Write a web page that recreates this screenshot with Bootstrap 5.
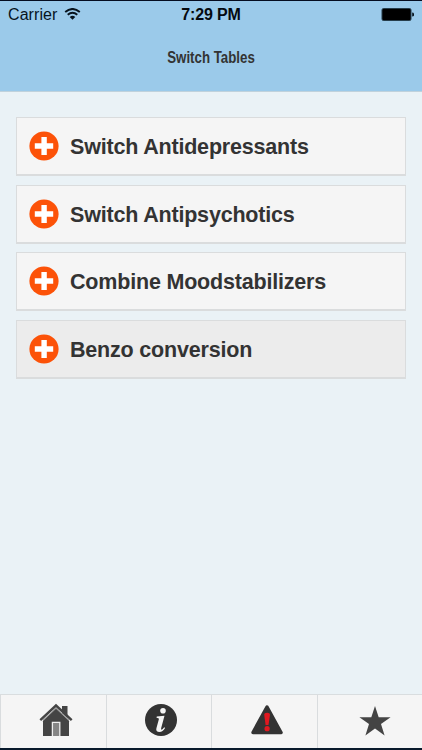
<!DOCTYPE html>
<html lang="en">
<head>
<meta charset="utf-8">
<meta name="viewport" content="width=device-width, initial-scale=1">
<title>Switch Tables</title>
<link href="https://cdn.jsdelivr.net/npm/bootstrap@5.3.0/dist/css/bootstrap.min.css" rel="stylesheet">
<style>
body{height:750px;background:#eaf2f6;font-family:"Liberation Sans",Arial,sans-serif;color:#333;overflow:hidden}
.app-head{height:92px;background:#9bcaea;border-top:1px solid #050d20;border-bottom:1px solid #c0d2dc}
.status{height:28px;padding:0 8px 0 8px;font-size:16px;color:#07131d;line-height:28px}
.status>*{flex:1 1 0}
.clock{font-weight:bold;color:#050a10;letter-spacing:-.15px}
.carrier{letter-spacing:.08px}
.wifi{margin:-2px 0 0 7px}
.battery{margin-bottom:2px}
.page-title{font-size:16px;font-weight:bold;line-height:20px;margin:19px 0 0;transform:scaleX(.83)}
.choices{padding:25px 16px 0;gap:8.7px}
.choice{height:59px;background:#f5f5f5;border:1px solid #dadcdd;border-bottom-width:2px;border-radius:0;padding:2px 12px 0 11.5px;gap:11.5px;color:#333;font-size:21.5px;font-weight:bold;letter-spacing:-.19px;white-space:nowrap}
.choice:hover,.choice.current{background:#ececec}
.choice svg{flex:none;margin-top:-2px}
.tabs{height:56px;background:#f5f5f5;border-top:1px solid #d9dddf;border-bottom:2px solid #081a2c}
.tabs a{border-left:1px solid #d9dcde;flex:0 0 25%;padding:0 0 3px 5px}
.tabs a:last-child{padding-left:10px}
</style>
<script src="https://cdn.jsdelivr.net/npm/bootstrap@5.3.0/dist/js/bootstrap.bundle.min.js"></script>
</head>
<body class="d-flex flex-column m-0">
<svg class="d-none"><symbol id="plus" viewBox="0 0 30 30"><circle cx="15" cy="15" r="14.6" fill="#fc5208"/><path d="M12.4 6h5.4v6.3h6.4v5.4h-6.4V24h-5.4v-6.3H5.8v-5.4h6.6z" fill="#fff"/></symbol></svg>
<header class="app-head flex-shrink-0">
  <div class="status d-flex align-items-center">
    <div class="d-flex align-items-center"><span class="carrier">Carrier</span>
      <svg class="wifi" width="17" height="12" viewBox="0 0 16 12" fill="none" stroke="#07131d" stroke-width="1.9"><path d="M.7 3.9Q8-2 15.3 3.9M3.2 6.8Q8 2.8 12.8 6.8"/><path d="M5.2 8.9Q8 6.7 10.8 8.9L8 11.8z" fill="#07131d" stroke="none"/></svg>
    </div>
    <div class="clock text-center">7:29 PM</div>
    <div class="d-flex justify-content-end"><svg class="battery" width="33" height="13" viewBox="0 0 33 13"><rect x="1" y=".5" width="29" height="12" rx="1.5" fill="#000" stroke="#263d4b"/><path d="M31.2 4.5q2 .3 2 2t-2 2z" fill="#07131d"/></svg></div>
  </div>
  <h1 class="page-title text-center">Switch Tables</h1>
</header>
<main class="choices d-flex flex-column flex-grow-1">
  <a class="choice d-flex align-items-center text-decoration-none" href="#"><svg width="30" height="30"><use href="#plus"/></svg><span>Switch Antidepressants</span></a>
  <a class="choice d-flex align-items-center text-decoration-none" href="#"><svg width="30" height="30"><use href="#plus"/></svg><span>Switch Antipsychotics</span></a>
  <a class="choice d-flex align-items-center text-decoration-none" href="#"><svg width="30" height="30"><use href="#plus"/></svg><span>Combine Moodstabilizers</span></a>
  <a class="choice current d-flex align-items-center text-decoration-none" href="#"><svg width="30" height="30"><use href="#plus"/></svg><span>Benzo conversion</span></a>
</main>
<nav class="tabs d-flex flex-shrink-0">
  <a class="d-flex align-items-center justify-content-center" href="#" aria-label="Home"><svg width="34" height="34" viewBox="0 0 34 34"><path d="M4 17L17 5l13 12v16H4z" fill="#444"/><path d="M23 3h5.5v12L23 10z" fill="#444"/><path d="M1.3 17.2L17 2.5l15.7 14.7" fill="none" stroke="#444" stroke-width="2.4"/><path d="M3.5 18.2L17 5.4l13.5 12.8" fill="none" stroke="#aaa" stroke-width=".8"/><path d="M13.4 33V19.4h7.4V33" fill="#858585" stroke="#eee" stroke-width="1.3"/></svg></a>
  <a class="d-flex align-items-center justify-content-center" href="#" aria-label="Information"><svg width="34" height="34" viewBox="0 0 34 34"><circle cx="17" cy="17" r="16" fill="#333"/><circle cx="19" cy="7.7" r="2.8" fill="#f5f5f5"/><path d="M12.8 13.4l7.7-.7-3.3 12.2q-.5 1.8.4 1.8 1 0 2.6-2.4l.9.6q-2.4 4-5.6 4-4 0-3.1-3.6l2.4-8.8q.5-1.8-2.3-1.8z" fill="#f5f5f5"/></svg></a>
  <a class="d-flex align-items-center justify-content-center" href="#" aria-label="Warning"><svg width="34" height="34" viewBox="0 0 34 34"><path d="M17 4L31 29.5H3z" fill="#333" stroke="#333" stroke-width="3.5" stroke-linejoin="round"/><path d="M14.2 11.8q0-2 2.9-2t2.9 2L18.5 22h-2.9z" fill="#e01820"/><circle cx="17.1" cy="25.7" r="2.6" fill="#e01820"/></svg></a>
  <a class="d-flex align-items-center justify-content-center" href="#" aria-label="Favorites"><svg width="34" height="34" viewBox="0 0 34 34"><path d="M17 3l3.7 11.2h11.9L23 21.1 26.6 32.5 17 25.6 7.4 32.5 11 21.1 1.4 14.2h11.9z" fill="#444"/></svg></a>
</nav>
</body>
</html>
